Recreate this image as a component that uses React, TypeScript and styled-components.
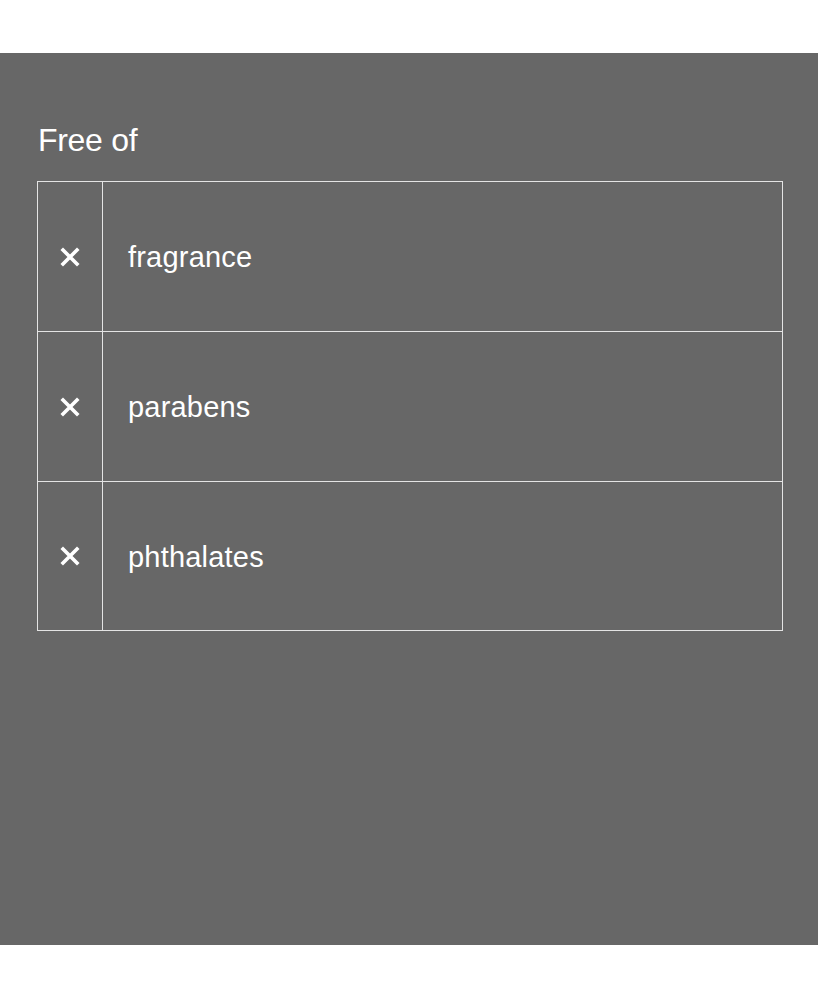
import React from "react";
import styled, { createGlobalStyle } from "styled-components";

const GlobalStyle = createGlobalStyle`
  html, body {
    margin: 0;
    padding: 0;
    background: #ffffff;
  }
  body {
    font-family: "Liberation Sans", Arial, Helvetica, sans-serif;
  }
`;

const Page = styled.div`
  padding-top: 53px;
  padding-bottom: 55px;
  background: #ffffff;
`;

const Panel = styled.section`
  background: #676767;
  height: 892px;
  box-sizing: border-box;
  padding: 71px 35px 0 37px;
  display: flex;
  flex-direction: column;
  gap: 25px;
`;

const Title = styled.h2`
  margin: 0;
  padding-left: 1px;
  font-family: "Liberation Sans", Arial, Helvetica, sans-serif;
  font-weight: 400;
  font-size: 32px;
  line-height: 32px;
  letter-spacing: -0.3px;
  color: #ffffff;
`;

const List = styled.ul`
  list-style: none;
  margin: 0;
  padding: 0;
  border: 1px solid #e4e4e4;
`;

const Row = styled.li`
  display: grid;
  grid-template-columns: 65px 1fr;
  height: ${(p: { $last?: boolean }) => (p.$last ? "148px" : "149px")};
  & + & {
    border-top: 1px solid #e4e4e4;
  }
`;

const IconCell = styled.div`
  display: flex;
  align-items: center;
  justify-content: center;
  padding-right: 1px;
  border-right: 1px solid #e4e4e4;
`;

const Label = styled.div`
  display: flex;
  align-items: center;
  padding-left: 25px;
  padding-top: 2px;
  font-size: 29px;
  letter-spacing: 0.2px;
  color: #ffffff;
`;

const Cross = () => (
  <svg width="20" height="20" viewBox="0 0 20 20" aria-hidden="true">
    <path
      d="M3 3 L17 17 M17 3 L3 17"
      stroke="#ffffff"
      strokeWidth="3.6"
      strokeLinecap="square"
      fill="none"
    />
  </svg>
);

const items = ["fragrance", "parabens", "phthalates"];

export default function App() {
  return (
    <>
      <GlobalStyle />
      <Page>
        <Panel>
          <Title>Free of</Title>
          <List>
            {items.map((item, i) => (
              <Row key={item} $last={i === items.length - 1}>
                <IconCell>
                  <Cross />
                </IconCell>
                <Label>{item}</Label>
              </Row>
            ))}
          </List>
        </Panel>
      </Page>
    </>
  );
}
